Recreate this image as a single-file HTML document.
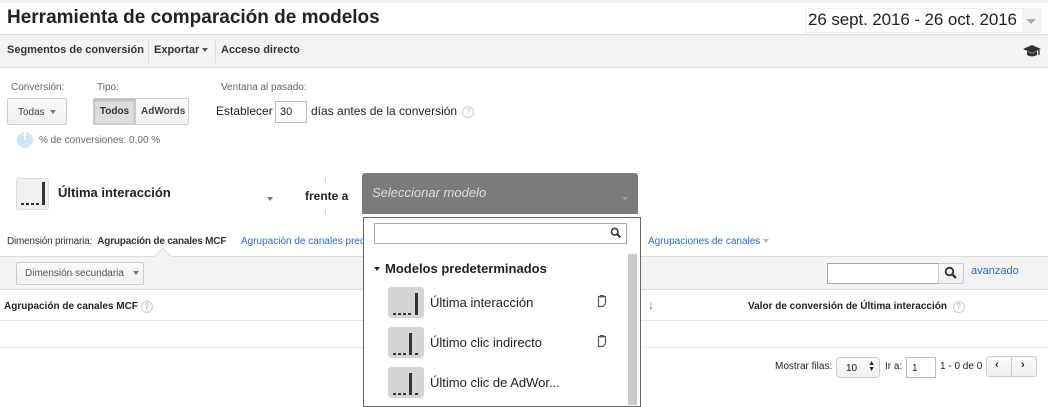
<!DOCTYPE html>
<html><head><meta charset="utf-8"><style>
*{margin:0;padding:0;box-sizing:border-box}
body{width:1048px;height:405px;overflow:hidden;background:#fff;font-family:"Liberation Sans",Arial,sans-serif;color:#222;position:relative}
.a{position:absolute;white-space:nowrap}
.b{font-weight:bold}
.lbl{font-size:10px;color:#666}
.btn{position:absolute;border:1px solid #ccc;border-radius:2px;background:linear-gradient(#fafafa,#f0f0f0);font-size:10px;color:#444}
.tri{display:inline-block;width:0;height:0;border-left:3.5px solid transparent;border-right:3.5px solid transparent;border-top:4px solid #777;vertical-align:middle}
.mi{position:absolute;background:#d4d4d4;border-radius:3px}
.mi i{position:absolute;background:#333}
.q{display:inline-block;width:12px;height:12px;border:1px solid #ccc;border-radius:50%;font-size:8px;color:#bbb;text-align:center;line-height:10px}
</style></head><body>
<div class="a" style="left:0;top:0;width:1048px;height:3px;background:#f2f2f2"></div>
<div class="a b" style="left:7px;top:7px;font-size:19px;color:#222">Herramienta de comparación de modelos</div>
<div class="a" style="left:805px;top:8px;width:237px;height:25px;border:1px solid #eee;border-radius:2px;background:#fff"></div>
<div class="a" style="left:1022px;top:9px;width:19px;height:23px;background:#f3f3f3"></div>
<div class="a" style="left:808px;top:10px;font-size:17px;color:#222;letter-spacing:-0.1px">26 sept. 2016 - 26 oct. 2016</div>
<div class="a" style="left:1026px;top:19px;width:10px;height:0;border-left:5px solid transparent;border-right:5px solid transparent;border-top:5px solid #aaa"></div>

<div class="a" style="left:0;top:34px;width:1048px;height:34px;background:#f3f3f3;border-top:1px solid #ddd;border-bottom:1px solid #ddd"></div>
<div class="a b" style="left:7px;top:44px;font-size:11px;color:#333">Segmentos de conversión</div>
<div class="a" style="left:148px;top:39px;width:1px;height:24px;background:#ddd"></div>
<div class="a b" style="left:154px;top:44px;font-size:11px;color:#333">Exportar <span class="tri" style="border-top-color:#555"></span></div>
<div class="a" style="left:215px;top:39px;width:1px;height:24px;background:#ddd"></div>
<div class="a b" style="left:221px;top:44px;font-size:11px;color:#333">Acceso directo</div>
<svg class="a" style="left:1022px;top:44px" width="20" height="14" viewBox="0 0 20 14"><path d="M1 5L10 1L19 5L10 9Z" fill="#333"/><path d="M5 7V11Q10 14 15 11V7L10 9.5Z" fill="#333"/><path d="M17 6V11" stroke="#333" stroke-width="1.3"/></svg>

<div class="a lbl" style="left:11px;top:82px">Conversión:</div>
<div class="a lbl" style="left:97px;top:82px">Tipo:</div>
<div class="a lbl" style="left:221px;top:82px">Ventana al pasado:</div>
<div class="btn" style="left:7px;top:98px;width:60px;height:27px;padding:8px 0 0 10px">Todas <span class="tri" style="margin-left:3px"></span></div>
<div class="btn" style="left:93px;top:98px;width:96px;height:27px"></div>
<div class="a b" style="left:94px;top:99px;width:41px;height:25px;background:#ddd;box-shadow:inset 0 1px 3px rgba(0,0,0,.25);font-size:10px;padding-top:7px;text-align:center;color:#333">Todos</div>
<div class="a" style="left:135px;top:99px;width:1px;height:25px;background:#ccc"></div>
<div class="a b" style="left:141px;top:106px;font-size:10px;color:#444">AdWords</div>
<div class="a" style="left:216px;top:104px;font-size:12px">Establecer</div>
<div class="a" style="left:275px;top:101px;width:32px;height:22px;border:1px solid #bbb;font-size:11px;padding:4px 0 0 4px">30</div>
<div class="a" style="left:311px;top:104px;font-size:12px">días antes de la conversión</div>
<div class="a" style="left:462px;top:101px"><span class="q">?</span></div>
<div class="a" style="left:17px;top:132px;width:16px;height:16px;border-radius:50%;background:#cde8f5"></div>
<div class="a" style="left:24px;top:132px;width:2px;height:8px;background:#fff"></div>
<div class="a" style="left:39px;top:135px;font-size:10px;color:#666">% de conversiones: 0,00 %</div>

<div class="mi" style="left:16px;top:178px;width:33px;height:32px;background:#f1f1f1;border:1px solid #ddd"><i style="left:25px;top:3px;width:3px;height:23px"></i><i style="left:4px;top:24px;width:18px;height:2px;background:repeating-linear-gradient(90deg,#333 0 3px,transparent 3px 5px)"></i></div>
<div class="a b" style="left:58px;top:185px;font-size:13px">Última interacción</div>
<div class="a" style="left:267px;top:190px"><span class="tri"></span></div>
<div class="a" style="left:325px;top:178px;width:1px;height:5px;background:#ccc"></div>
<div class="a" style="left:325px;top:209px;width:1px;height:5px;background:#ccc"></div>
<div class="a b" style="left:305px;top:189px;font-size:12px">frente a</div>
<div class="a" style="left:362px;top:173px;width:276px;height:41px;background:#7b7b7b;border-radius:3px 3px 0 0"></div>
<div class="a" style="left:372px;top:185px;font-size:13px;font-style:italic;color:#ddd">Seleccionar modelo</div>
<div class="a" style="left:622px;top:190px"><span class="tri" style="border-top-color:#999"></span></div>

<div class="a lbl" style="left:7px;top:236px;color:#333;letter-spacing:-0.2px">Dimensión primaria: &nbsp;<b>Agrupación de canales MCF</b></div>
<div class="a" style="left:241px;top:236px;font-size:10px;color:#2a6ccb">Agrupación de canales predeterminada</div>
<div class="a" style="left:648px;top:236px;font-size:10px;color:#2a6ccb">Agrupaciones de canales <span class="tri" style="border-top-color:#bbb"></span></div>

<div class="a" style="left:0;top:256px;width:1048px;height:34px;background:#f3f3f3;border-top:1px solid #ddd;border-bottom:1px solid #ddd"></div>
<div class="a" style="left:157px;top:250px;width:12px;height:12px;background:#f3f3f3;border-left:1px solid #ddd;border-top:1px solid #ddd;transform:rotate(45deg)"></div>
<div class="btn" style="left:16px;top:262px;width:128px;height:23px;padding:5px 0 0 8px;font-size:10px;color:#555">Dimensión secundaria <span class="tri" style="margin-left:6px"></span></div>
<div class="a" style="left:827px;top:263px;width:112px;height:21px;border:1px solid #aaa;background:#fff"></div>
<div class="btn" style="left:938px;top:263px;width:26px;height:21px"></div>
<svg class="a" style="left:944px;top:266px" width="14" height="14" viewBox="0 0 14 14"><circle cx="5.5" cy="5.5" r="3.8" fill="none" stroke="#333" stroke-width="1.8"/><path d="M8.3 8.3L12 12" stroke="#333" stroke-width="2.4"/></svg>
<div class="a" style="left:971px;top:265px;font-size:11px;color:#2a6ccb">avanzado</div>

<div class="a b" style="left:4px;top:301px;font-size:10px;line-height:12px">Agrupación de canales MCF <span class="q" style="vertical-align:top">?</span></div>
<div class="a" style="left:147px;top:299px;width:1px;height:15px;background:#ddd"></div>
<div class="a" style="left:648px;top:298px;font-size:12px;color:#666">↓</div>
<div class="a b" style="left:748px;top:301px;font-size:10px;line-height:12px">Valor de conversión de Última interacción <span class="q" style="vertical-align:top;margin-left:3px">?</span></div>
<div class="a" style="left:0;top:320px;width:1048px;height:1px;background:#e3e3e3"></div>
<div class="a" style="left:0;top:347px;width:1048px;height:1px;background:#e3e3e3"></div>

<div class="a" style="left:775px;top:361px;font-size:10px">Mostrar filas:</div>
<div class="btn" style="left:836px;top:357px;width:44px;height:21px;border-radius:4px;font-size:10px;padding:5px 0 0 9px;color:#222">10<span style="position:absolute;right:4px;top:3px;font-size:7px;line-height:6px">▲<br>▼</span></div>
<div class="a" style="left:885px;top:361px;font-size:10px">Ir a:</div>
<div class="a" style="left:906px;top:357px;width:30px;height:21px;border:1px solid #bbb;font-size:10px;padding:5px 0 0 5px">1</div>
<div class="a" style="left:940px;top:361px;font-size:10px">1 - 0 de 0</div>
<div class="btn" style="left:986px;top:356px;width:51px;height:21px;border-radius:3px"></div>
<div class="a" style="left:1011px;top:357px;width:1px;height:19px;background:#ccc"></div>
<div class="a b" style="left:995px;top:359px;font-size:11px">‹</div>
<div class="a b" style="left:1021px;top:359px;font-size:11px">›</div>

<div class="a" style="left:363px;top:217px;width:278px;height:190px;border:1px solid #666;background:#fff"></div>
<div class="a" style="left:374px;top:223px;width:253px;height:21px;border:1px solid #aaa"></div>
<svg class="a" style="left:610px;top:227px" width="12" height="12" viewBox="0 0 14 14"><circle cx="5.5" cy="5.5" r="3.8" fill="none" stroke="#333" stroke-width="1.8"/><path d="M8.3 8.3L12 12" stroke="#333" stroke-width="2.4"/></svg>
<div class="a" style="left:628px;top:254px;width:9px;height:151px;background:#c9c9c9"></div>
<div class="a b" style="left:374px;top:261px;font-size:13px"><span class="tri" style="border-top-color:#222;margin-right:5px;vertical-align:2px"></span>Modelos predeterminados</div>
<div class="mi" style="left:388px;top:287px;width:36px;height:31px"><i style="left:27px;top:6px;width:3px;height:22px"></i><i style="left:5px;top:26px;width:20px;height:2px;background:repeating-linear-gradient(90deg,#333 0 3px,transparent 3px 5px)"></i></div>
<div class="a" style="left:430px;top:295px;font-size:13px">Última interacción</div>
<div class="mi" style="left:388px;top:327px;width:36px;height:31px"><i style="left:21px;top:6px;width:3px;height:22px"></i><i style="left:5px;top:26px;width:14px;height:2px;background:repeating-linear-gradient(90deg,#333 0 3px,transparent 3px 5px)"></i><i style="left:27px;top:26px;width:3px;height:2px"></i></div>
<div class="a" style="left:430px;top:335px;font-size:13px">Último clic indirecto</div>
<div class="mi" style="left:388px;top:367px;width:36px;height:31px"><i style="left:21px;top:6px;width:3px;height:22px"></i><i style="left:5px;top:26px;width:14px;height:2px;background:repeating-linear-gradient(90deg,#333 0 3px,transparent 3px 5px)"></i><i style="left:27px;top:26px;width:3px;height:2px"></i></div>
<div class="a" style="left:430px;top:375px;font-size:13px">Último clic de AdWor...</div>
<svg class="a" style="left:597px;top:294px" width="10" height="14" viewBox="0 0 10 14"><path d="M1.5 2.5H8.5V9.5L6 12.5H1.5Z" fill="none" stroke="#555" stroke-width="1.2"/><rect x="3" y="1" width="4" height="2.5" fill="#555"/></svg>
<svg class="a" style="left:597px;top:334px" width="10" height="14" viewBox="0 0 10 14"><path d="M1.5 2.5H8.5V9.5L6 12.5H1.5Z" fill="none" stroke="#555" stroke-width="1.2"/><rect x="3" y="1" width="4" height="2.5" fill="#555"/></svg>
</body></html>
